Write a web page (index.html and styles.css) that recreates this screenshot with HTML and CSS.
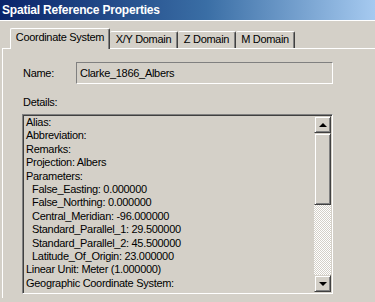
FILE: index.html
```html
<!DOCTYPE html>
<html lang="en">
<head>
    <meta charset="UTF-8">
    <meta name="viewport" content="width=device-width, initial-scale=1.0">
    <title>Spatial Reference Properties</title>
    <link rel="stylesheet" href="styles.css">
</head>
<body>

    <div class="titlebar">Spatial Reference Properties</div>

    <div class="dialog">
        <div class="tabs">
            <div class="tab active">Coordinate System</div>
            <div class="tab xy">X/Y Domain</div>
            <div class="tab z">Z Domain</div>
            <div class="tab m">M Domain</div>
        </div>

        <div class="panel">
            <div class="name-row">
                <span class="label">Name:</span>
                <div class="field">Clarke_1866_Albers</div>
            </div>

            <div class="label details">Details:</div>

            <div class="listbox">
                <div class="lines">
                    <div>Alias:</div>
                    <div>Abbreviation:</div>
                    <div>Remarks:</div>
                    <div>Projection: Albers</div>
                    <div>Parameters:</div>
                    <div class="indent">False_Easting: 0.000000</div>
                    <div class="indent">False_Northing: 0.000000</div>
                    <div class="indent">Central_Meridian: -96.000000</div>
                    <div class="indent">Standard_Parallel_1: 29.500000</div>
                    <div class="indent">Standard_Parallel_2: 45.500000</div>
                    <div class="indent">Latitude_Of_Origin: 23.000000</div>
                    <div>Linear Unit: Meter (1.000000)</div>
                    <div>Geographic Coordinate System:</div>
                </div>
                <div class="scrollbar">
                    <div class="sbtn"><span class="arrow up"></span></div>
                    <div class="thumb"></div>
                    <div class="track"></div>
                    <div class="sbtn"><span class="arrow down"></span></div>
                </div>
            </div>
        </div>
    </div>

</body>
</html>
```

FILE: styles.css
```css
body {
    margin: 0;
    background-color: #d4d0c8;
    font-family: 'Liberation Sans', Arial, sans-serif;
    font-size: 11px;
    letter-spacing: -0.3px;
    color: #000;
    overflow: hidden;
}

.titlebar {
    height: 20px;
    line-height: 20px;
    padding-left: 2px;
    background: linear-gradient(90deg, #0a246a 0%, #3a6ea5 55%, #a6caf0 100%);
    color: #fff;
    font-weight: bold;
    font-size: 12px;
    letter-spacing: -0.2px;
}

.dialog {
    padding: 0 0 0 2px;
    border-top: 1px solid #fff;
}

.tabs {
    display: flex;
    align-items: flex-end;
    margin-top: 7px;
    padding-left: 8px;
    height: 20px;
    position: relative;
    z-index: 1;
}

.tab {
    box-sizing: border-box;
    height: 17px;
    line-height: 15px;
    text-align: center;
    border-top: 1px solid #fff;
    border-left: 1px solid #fff;
    border-right: 1px solid #404040;
    box-shadow: inset -1px 0 #808080;
    border-radius: 2px 2px 0 0;
}

.tab.active {
    width: 100px;
    height: 21px;
    line-height: 17px;
    background-color: #d4d0c8;
    margin-bottom: -1px;
}

.tab.xy {
    width: 68px;
    border-left: none;
}

.tab.z {
    width: 58px;
    border-left: none;
}

.tab.m {
    width: 59px;
    border-left: none;
}

.panel {
    border-top: 1px solid #fff;
    border-left: 1px solid #fff;
    padding: 13px 0 0 19px;
    height: 236px;
}

.name-row {
    display: flex;
    align-items: center;
}

.label {
    margin-left: 1px;
    line-height: 13px;
}

.name-row .label {
    width: 53px;
}

.field {
    box-sizing: border-box;
    width: 257px;
    height: 22px;
    line-height: 20px;
    padding-left: 3px;
    border: 1px solid;
    border-color: #808080 #fff #fff #808080;
}

.details {
    margin-top: 12px;
}

.listbox {
    box-sizing: border-box;
    display: flex;
    width: 311px;
    height: 180px;
    margin-top: 5px;
    border: 1px solid;
    border-color: #808080 #fff #fff #808080;
    box-shadow: inset 1px 1px #404040, inset -1px -1px #d4d0c8;
    padding: 1px;
}

.lines {
    flex: 1;
    padding-left: 2px;
    line-height: 13.4px;
    white-space: nowrap;
    overflow: hidden;
}

.indent {
    padding-left: 6px;
}

.scrollbar {
    width: 17px;
    display: flex;
    flex-direction: column;
}

.sbtn, .thumb {
    box-sizing: border-box;
    border: 1px solid;
    border-color: #d4d0c8 #404040 #404040 #d4d0c8;
    box-shadow: inset 1px 1px #fff, inset -1px -1px #808080;
    background-color: #d4d0c8;
}

.sbtn {
    height: 17px;
    display: flex;
    align-items: center;
    justify-content: center;
}

.thumb {
    height: 72px;
}

.track {
    flex: 1;
    background-color: #fff;
    background-image: repeating-conic-gradient(#d4d0c8 0 25%, #fff 0 50%);
    background-size: 2px 2px;
}

.arrow {
    width: 0;
    height: 0;
    border-left: 4px solid transparent;
    border-right: 4px solid transparent;
}

.arrow.up {
    border-bottom: 4px solid #000;
}

.arrow.down {
    border-top: 4px solid #000;
}
```
